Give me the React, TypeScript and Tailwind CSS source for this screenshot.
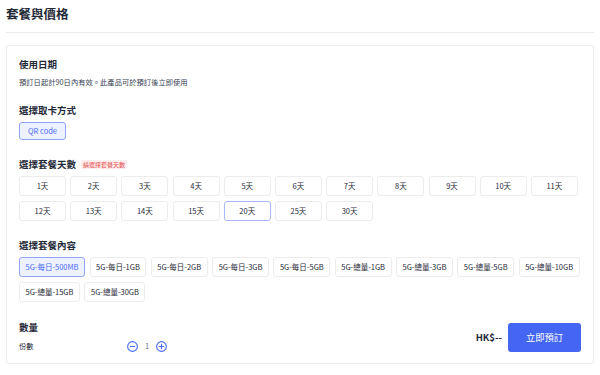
import React from "react";

const days = ["1天","2天","3天","4天","5天","6天","7天","8天","9天","10天","11天","12天","13天","14天","15天","20天","25天","30天"];
const pkgs = ["5G-每日-500MB","5G-每日-1GB","5G-每日-2GB","5G-每日-3GB","5G-每日-5GB","5G-總量-1GB","5G-總量-3GB","5G-總量-5GB","5G-總量-10GB","5G-總量-15GB","5G-總量-30GB"];

function Minus() {
  return (
    <svg width="11" height="11" viewBox="0 0 12 12" fill="none">
      <circle cx="6" cy="6" r="5.3" stroke="#4a6cf7" strokeWidth="1.2" />
      <path d="M3.5 6h5" stroke="#4a6cf7" strokeWidth="1.2" strokeLinecap="round" />
    </svg>
  );
}
function Plus() {
  return (
    <svg width="11" height="11" viewBox="0 0 12 12" fill="none">
      <circle cx="6" cy="6" r="5.3" stroke="#4a6cf7" strokeWidth="1.2" />
      <path d="M3.5 6h5M6 3.5v5" stroke="#4a6cf7" strokeWidth="1.2" strokeLinecap="round" />
    </svg>
  );
}

export default function App() {
  return (
    <div className="w-[600px] h-[375px] bg-white px-[6px] text-[#1f2937]" style={{ fontFamily: '"Noto Sans CJK TC", "Noto Sans", sans-serif' }}>
      <div className="pt-[4px] pb-[8px] border-b border-[#ececec]">
        <div className="text-[12.5px] leading-[20px] font-bold">套餐與價格</div>
      </div>
      <div className="mt-[12px] border border-[#ececec] rounded-[3px] px-[12px] pt-[10px] pb-[11px]">
        <div className="text-[9.5px] leading-[16px] font-bold">使用日期</div>
        <div className="mt-[4px] text-[7.3px] leading-[12px] text-[#374151]">預訂日起計90日內有效。此產品可於預訂後立即使用</div>

        <div className="mt-[14px] text-[9.5px] leading-[16px] font-bold">選擇取卡方式</div>
        <div className="mt-[4px] flex">
          <div className="w-[47px] h-[18px] flex items-center justify-center rounded-[3px] border border-[#8fa3f8] bg-[#eef1ff] text-[#4a6cf7] text-[7.5px]">QR code</div>
        </div>

        <div className="mt-[16px] flex items-center gap-[5px]">
          <div className="text-[9.5px] leading-[16px] font-bold">選擇套餐天數</div>
          <div className="bg-[#fdeeee] text-[#e5484d] text-[6px] leading-[9px] px-[2px] rounded-[1px]">請選擇套餐天數</div>
        </div>
        <div className="mt-[4px] flex flex-wrap gap-x-[4.2px] gap-y-[5px]">
          {days.map((d) => (
            <div
              key={d}
              className={
                d === "20天"
                  ? "w-[47px] h-[20px] flex items-center justify-center rounded-[3px] border border-[#a9b8fb] bg-white text-[7.5px]"
                  : "w-[47px] h-[20px] flex items-center justify-center rounded-[3px] border border-[#ececec] bg-white text-[7.5px]"
              }
            >
              {d}
            </div>
          ))}
        </div>

        <div className="mt-[16px] text-[9.5px] leading-[16px] font-bold">選擇套餐內容</div>
        <div className="mt-[4px] flex flex-wrap gap-x-[4.5px] gap-y-[5px]">
          {pkgs.map((p, i) => (
            <div
              key={p}
              className={
                i === 0
                  ? "h-[20px] px-[5.5px] flex items-center justify-center rounded-[3px] border border-[#8fa3f8] bg-[#eef1ff] text-[#4a6cf7] text-[7.5px]"
                  : "h-[20px] px-[5.5px] flex items-center justify-center rounded-[3px] border border-[#ececec] bg-white text-[7.5px]"
              }
            >
              {p}
            </div>
          ))}
        </div>

        <div className="mt-[17px] flex items-end justify-between">
          <div>
            <div className="text-[9.5px] leading-[16px] font-bold">數量</div>
            <div className="mt-[5px] flex items-center h-[12px]">
              <div className="w-[108px] text-[7.3px]">份數</div>
              <Minus />
              <div className="w-[18px] text-center text-[7.5px] text-[#6b7280]">1</div>
              <Plus />
            </div>
          </div>
          <div className="flex items-center gap-[6px]">
            <div className="text-[9.5px] font-bold">HK$--</div>
            <div className="w-[73px] h-[29px] flex items-center justify-center rounded-[3px] bg-[#4466f2] text-white text-[9.3px]">立即預訂</div>
          </div>
        </div>
      </div>
    </div>
  );
}
